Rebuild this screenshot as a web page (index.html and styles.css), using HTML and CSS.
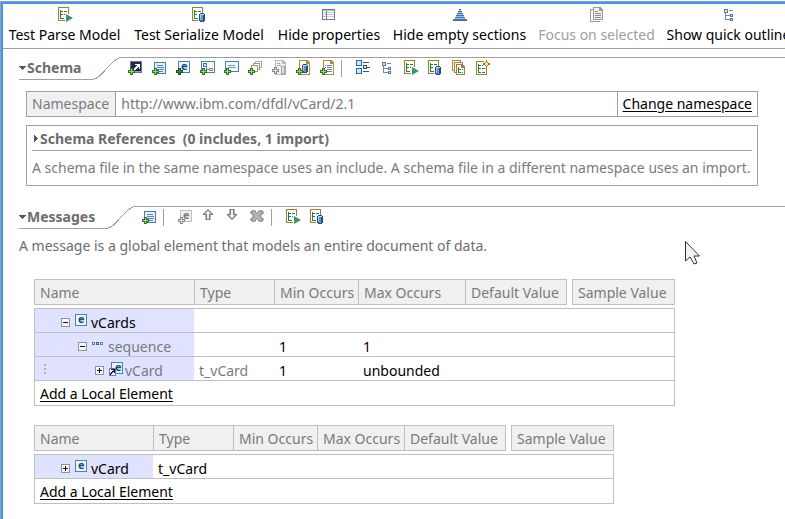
FILE: index.html
```html
<!DOCTYPE html>
<html lang="en">
<head>
<meta charset="utf-8">
<title>vCard</title>
<link rel="stylesheet" href="styles.css">
</head>
<body>
<svg class="defs" aria-hidden="true">
  <symbol id="plus" viewBox="0 0 7 7"><path d="M2 0h3v2h2v3H5v2H2V5H0V2h2z" fill="#28733a"/><path d="M3 1h1v5H3zM1 3h5v1H1z" fill="#a9d84a"/></symbol>
  <symbol id="plus-dark" viewBox="0 0 7 7"><path d="M2 0h3v2h2v3H5v2H2V5H0V2h2z" fill="#1d5128"/><path d="M3 1h1v5H3zM1 3h5v1H1z" fill="#4d8a3c"/></symbol>
  <symbol id="plus-gray" viewBox="0 0 7 7"><path d="M2 0h3v2h2v3H5v2H2V5H0V2h2z" fill="#8b8b8b"/><path d="M3 1h1v5H3zM1 3h5v1H1z" fill="#e2e2e2"/></symbol>
  <symbol id="cyl" viewBox="0 0 6 9"><path d="M1 0h4v1h1v7H5v1H1V8H0V1h1z" fill="#244f8c"/><path d="M1 2h1v5H1z" fill="#a9c6e8"/><path d="M2 2h2v6H2z" fill="#6793c8"/><path d="M1 1h4v1H1z" fill="#c7dcf2"/></symbol>
  <symbol id="sheet" viewBox="0 0 16 16"><path d="M1 0h11v14H1z" fill="#9d7f35"/><path d="M2 1h9v12H2z" fill="#fffdf4"/><path d="M3 3h1v9H3zM4 4h2v1H4zM4 7h2v1H4zM4 11h3v1H4zM7 4h3v1H7zM7 7h3v1H7z" fill="#1d8152"/></symbol>
  <symbol id="parse" viewBox="0 0 16 16"><use href="#sheet" width="16" height="16"/><path d="M8 6h2v1h2v1h2v6h-3v1H8z" fill="#fff"/><path d="M9 7l7 4-7 4z" fill="#3d9668" shape-rendering="auto"/></symbol>
  <symbol id="serialize" viewBox="0 0 16 16"><use href="#sheet" width="16" height="16"/><path d="M7 6h7v8H7z" fill="#fff"/><use href="#cyl" x="8" y="6" width="6" height="9"/></symbol>
  <symbol id="table" viewBox="0 0 16 16"><path d="M1 2h13v11H1z" fill="#707b89"/><path d="M2 4h3v1H2zM6 4h7v1H6zM2 6h3v1H2zM6 6h7v1H6zM2 8h3v1H2zM6 8h7v1H6zM2 10h3v2H2zM6 10h7v2H6z" fill="#fff"/><path d="M2 3h11v1H2z" fill="#a9bed5"/><path d="M2 5h3v1H2zM2 7h3v1H2zM2 9h3v1H2zM6 5h7v1H6zM6 7h7v1H6zM6 9h7v1H6z" fill="#c3cfdc"/></symbol>
  <symbol id="pyramid" viewBox="0 0 16 16"><path d="M7 2h2v2H7zM6 4h4v2H6zM5 6h6v2H5zM4 8h8v2H4zM3 10h10v2H3zM1 12h14v2H1z" fill="#3f6fad"/><path d="M7 3h2v1H7zM6 5h4v1H6zM5 7h6v1H5zM4 9h8v1H4zM3 11h10v1H3z" fill="#a6c3e5"/></symbol>
  <symbol id="pages" viewBox="0 0 16 16"><path d="M1 2h3v1H2v11h9v1H1z" fill="#9a9a9a"/><path d="M4 0h7l3 3v10H4z" fill="#9a9a9a"/><path d="M5 1h5v3h3v8H5z" fill="#f3f3f3"/><path d="M6 4h3v1H6zM6 6h6v1H6zM6 8h6v1H6zM6 10h6v1H6z" fill="#8d8d8d"/></symbol>
  <symbol id="outline" viewBox="0 0 16 16"><path d="M3 2h4v4H3zM9 7h3v3H9zM9 11h3v3H9z" fill="#5577ad"/><path d="M4 3h2v2H4zM10 8h1v1h-1zM10 12h1v1h-1z" fill="#dbe7f6"/><path d="M4 6h1v7H4zM5 8h4v1H5zM5 12h4v1H5zM8 3h4v1H8z" fill="#7188ac"/></symbol>
  <symbol id="add-arrow" viewBox="0 0 16 16"><path d="M3 1h12v12H3z" fill="#6b7694"/><path d="M4 2h10v10H4z" fill="#20264f"/><path d="M5 11h9v1H5z" fill="#8f9cc0"/><path d="M8 4h5v5h-1V7h-1v1h-1v1H9v1H7V8h1V7h1V6h1V5H8z" fill="#fff"/><use href="#plus" x="1" y="8" width="7" height="7"/></symbol>
  <symbol id="add-lines" viewBox="0 0 16 16"><path d="M3 2h12v12H3z" fill="#3f7fb0"/><path d="M4 3h10v10H4z" fill="#e6f1fb"/><path d="M6 5h6v1H6zM6 7h7v1H6zM6 9h7v1H6zM8 11h4v1H8z" fill="#5b84b5"/><use href="#plus" x="1" y="8" width="7" height="7"/></symbol>
  <symbol id="add-e" viewBox="0 0 16 16"><path d="M3 1h12v12H3z" fill="#4585b5"/><path d="M4 2h10v10H4z" fill="#edf5fd"/></symbol>
  <symbol id="add-tree" viewBox="0 0 16 16"><path d="M2 1h14v12H2z" fill="#4585b5"/><path d="M3 2h12v10H3z" fill="#f4f9ff"/><path d="M4 3h4v4H4z" fill="#4377b2"/><path d="M5 4h2v2H5z" fill="#dbe9f8"/><path d="M7 6h1v3h3v1H7z" fill="#6084ad"/><path d="M10 8h4v3h-4z" fill="#ba8a3c"/><path d="M11 9h2v1h-2z" fill="#f3dd9b"/><use href="#plus" x="1" y="8" width="7" height="7"/></symbol>
  <symbol id="add-note" viewBox="0 0 16 16"><path d="M2 1h14v11H2z" fill="#3f7fb0"/><path d="M3 2h12v9H3z" fill="#f2f8fe"/><path d="M5 5h7v1H5zM5 7h8v1H5z" fill="#7596bd"/><use href="#plus" x="1" y="8" width="7" height="7"/></symbol>
  <symbol id="add-group" viewBox="0 0 16 16"><path d="M8 1h7v7H8z" fill="#8fa9c4"/><path d="M8 1h7v1H8z" fill="#c8ae78"/><path d="M9 2h5v5H9z" fill="#fff"/><path d="M6 3h7v7H6z" fill="#9e9981"/><path d="M7 4h5v5H7z" fill="#fff"/><path d="M4 5h7v7H4z" fill="#ae9b69"/><path d="M5 6h5v5H5z" fill="#fff"/><use href="#plus" x="1" y="8" width="7" height="7"/></symbol>
  <symbol id="add-copy" viewBox="0 0 16 16"><path d="M4 0h8l3 3v12H4z" fill="#bdbdbd"/><path d="M5 1h6v3h3v10H5z" fill="#f0f0f0"/><path d="M6 3h3v1H6zM6 5h4v1H6z" fill="#aaa"/><path d="M10 6h5v9h-5z" fill="#a9a9a9"/><path d="M11 7h2v6h-2z" fill="#e2e2e2"/><use href="#plus-gray" x="1" y="7" width="7" height="7"/></symbol>
  <symbol id="add-cyl" viewBox="0 0 16 16"><path d="M4 0h8l3 3v12H4z" fill="#b28c3e"/><path d="M5 1h6v3h3v10H5z" fill="#fff8e6"/><use href="#cyl" x="7" y="4" width="6" height="9"/><use href="#plus" x="1" y="8" width="7" height="7"/></symbol>
  <symbol id="add-doc" viewBox="0 0 16 16"><path d="M4 0h8l3 3v12H4z" fill="#b28c3e"/><path d="M5 1h6v3h3v10H5z" fill="#fffdf8"/><path d="M6 5h1v1H6zM8 5h5v1H8zM6 7h1v1H6zM8 7h5v1H8zM8 9h5v1H8zM8 11h5v1H8z" fill="#627eae"/><use href="#plus" x="1" y="8" width="7" height="7"/></symbol>
  <symbol id="layout" viewBox="0 0 16 16"><path d="M1 0h6v6H1zM1 8h6v6H1z" fill="#226ca5"/><path d="M2 1h4v4H2zM2 9h4v4H2z" fill="#d3e8fa"/><path d="M8 2h6v1H8zM8 11h6v1H8zM12 7h3v1h-3z" fill="#31587e"/><path d="M8 5h4v4H8z" fill="#17538e"/><path d="M9 6h2v2H9z" fill="#d5e9fa"/></symbol>
  <symbol id="stack" viewBox="0 0 16 16"><path d="M1 0h9v11H1z" fill="#a58743"/><path d="M2 1h7v9H2z" fill="#fff8e6"/><path d="M3 2h9v11H3z" fill="#a58743"/><path d="M4 3h7v9H4z" fill="#fff8e6"/><path d="M5 4h6l3 3v8H5z" fill="#a07f3c"/><path d="M6 5h4v3h3v6H6z" fill="#fff"/><path d="M7 7h1v6H7zM8 9h2v1H8zM8 12h2v1H8zM11 9h1v1h-1zM11 12h1v1h-1z" fill="#1d8152"/></symbol>
  <symbol id="new-sheet" viewBox="0 0 16 16"><path d="M1 1h11v14H1z" fill="#9d7f35"/><path d="M2 2h9v12H2z" fill="#fffdf4"/><path d="M3 4h1v9H3zM4 5h2v1H4zM4 8h2v1H4zM4 12h2v1H4zM7 5h1v1H7zM7 8h3v1H7zM7 12h3v1H7z" fill="#1d8152"/><path d="M9 0h6v7H9z" fill="#fff"/><path d="M11 0h1v2h1v1h2v2h-2v1h-1v2h-1V6h-1V5H8V3h2V2h1z" fill="#a76b12"/><path d="M11 2h1v1h1v2h-1v1h-1V5h-1V3h1z" fill="#ffe5a0"/></symbol>
  <symbol id="add-e-gray" viewBox="0 0 16 16"><path d="M3 1h12v12H3z" fill="#b5c1cb"/><path d="M4 2h10v10H4z" fill="#f2f2f2"/></symbol>
  <symbol id="up" viewBox="0 0 16 16"><path d="M7 0l5 5v1H9.500v5h-5V6H2V5z" fill="#777" shape-rendering="auto"/><path d="M7 1.500L10 5H8v5H6V5H4z" fill="#f5f5f5" shape-rendering="auto"/></symbol>
  <symbol id="down" viewBox="0 0 16 16"><path d="M7 11l5-5V5H9.500V0h-5v5H2v1z" fill="#777" shape-rendering="auto"/><path d="M7 9.500L10 6H8V1H6v5H4z" fill="#f5f5f5" shape-rendering="auto"/></symbol>
  <symbol id="remove" viewBox="0 0 16 16"><path d="M3 1h3l2 3 2-3h3l2 2v1l-3 3 3 3v1l-2 2h-3l-2-3-2 3H3l-2-2v-1l3-3-3-3V3z" fill="#9b9b9b" shape-rendering="auto"/><path d="M4 3l8 8M12 3l-8 8" stroke="#b8b8b8" stroke-width="2" shape-rendering="auto"/></symbol>
  <symbol id="element" viewBox="0 0 13 14"><path d="M0 0h12v12H0z" fill="#4585b5"/><path d="M1 1h10v10H1z" fill="#edf5fd"/></symbol>
  <symbol id="element-ref" viewBox="0 0 15 14"><path d="M2 0h12v12H2z" fill="#4585b5"/><path d="M3 1h10v10H3z" fill="#edf5fd"/></symbol>
  <symbol id="ref-arrow" viewBox="0 0 15 14"><path d="M0 6h7v8H0z" fill="#667b99"/><path d="M1 7h5v6H1z" fill="#fff"/><path d="M2 7h4v4H5v-1H4v1H3v1H2v1H1v-2h1v-1h1V9h1V8H2z" fill="#171d48"/></symbol>
  <symbol id="sequence" viewBox="0 0 13 14"><path d="M0 4h3v3H0zM4 4h3v3H4zM8 4h3v3H8z" fill="#70798c"/><path d="M4 4h3v3H4z" fill="#236795"/><path d="M1 5h1v1H1zM5 5h1v1H5zM9 5h1v1H9z" fill="#fff"/></symbol>
  <symbol id="minus-box" viewBox="0 0 9 9"><path d="M0 0h9v9H0z" fill="#929292"/><path d="M1 1h7v7H1z" fill="#f7f7f7"/><path d="M2 4h5v1H2z" fill="#111"/></symbol>
  <symbol id="plus-box" viewBox="0 0 9 9"><use href="#minus-box" width="9" height="9"/><path d="M4 2h1v5H4z" fill="#111"/></symbol>
</svg>

<main class="editor">
  <nav class="actions">
    <button><svg class="icon"><use href="#parse"/></svg>Test Parse Model</button>
    <button><svg class="icon"><use href="#serialize"/></svg>Test Serialize Model</button>
    <button><svg class="icon"><use href="#table"/></svg>Hide properties</button>
    <button><svg class="icon"><use href="#pyramid"/></svg>Hide empty sections</button>
    <button disabled><svg class="icon"><use href="#pages"/></svg>Focus on selected</button>
    <button><svg class="icon"><use href="#outline"/></svg>Show quick outline</button>
  </nav>

  <section class="schema">
    <header class="bar">
      <h2><svg class="twisty" viewBox="0 0 7 4"><path d="M0 0h7L3.500 4z"/></svg>Schema</h2>
      <svg class="curve" viewBox="0 0 30 23"><path d="M0 22.500C10 22.500 19 .5 30 .5"/></svg>
      <div class="tools">
        <button aria-label="Add type"><svg class="icon"><use href="#add-arrow"/></svg></button>
        <button aria-label="Add message"><svg class="icon"><use href="#add-lines"/></svg></button>
        <button aria-label="Add element"><svg class="icon"><use href="#add-e"/><text x="6" y="10" class="e">e</text><use href="#plus-dark" x="1" y="8" width="7" height="7"/></svg></button>
        <button aria-label="Add complex type"><svg class="icon"><use href="#add-tree"/></svg></button>
        <button aria-label="Add simple type"><svg class="icon"><use href="#add-note"/></svg></button>
        <button aria-label="Add group"><svg class="icon"><use href="#add-group"/></svg></button>
        <button aria-label="Add copy" disabled><svg class="icon"><use href="#add-copy"/></svg></button>
        <button aria-label="Add format"><svg class="icon"><use href="#add-cyl"/></svg></button>
        <button aria-label="Add variable"><svg class="icon"><use href="#add-doc"/></svg></button>
        <span class="sep"></span>
        <button aria-label="Layout"><svg class="icon"><use href="#layout"/></svg></button>
        <button aria-label="Outline"><svg class="icon"><use href="#outline"/></svg></button>
        <button aria-label="Test parse"><svg class="icon"><use href="#parse"/></svg></button>
        <button aria-label="Test serialize"><svg class="icon"><use href="#serialize"/></svg></button>
        <button aria-label="Logical models"><svg class="icon"><use href="#stack"/></svg></button>
        <button aria-label="New model"><svg class="icon"><use href="#new-sheet"/></svg></button>
      </div>
    </header>
    <div class="panel namespace">
      <label for="ns">Namespace</label>
      <input id="ns" value="http://www.ibm.com/dfdl/vCard/2.1" readonly>
      <div class="change"><a href="#">Change namespace</a></div>
    </div>
    <div class="panel refs">
      <h3><svg class="closed" viewBox="0 0 4 7"><path d="M0 0v7l4-3.500z"/></svg>Schema References&nbsp; (0 includes, 1 import)</h3>
      <p>A schema file in the same namespace uses an include. A schema file in a different namespace uses an import.</p>
    </div>
  </section>

  <section class="messages">
    <header class="bar">
      <h2><svg class="twisty" viewBox="0 0 7 4"><path d="M0 0h7L3.500 4z"/></svg>Messages</h2>
      <svg class="curve" viewBox="0 0 30 23"><path d="M0 22.500C10 22.500 19 .5 30 .5"/></svg>
      <div class="tools">
        <button aria-label="Add message"><svg class="icon"><use href="#add-lines"/></svg></button>
        <span class="sep"></span>
        <button aria-label="Add element" disabled><svg class="icon"><use href="#add-e-gray"/><text x="6" y="10" class="e faded">e</text><use href="#plus-gray" x="1" y="8" width="7" height="7"/></svg></button>
        <button aria-label="Move up" disabled><svg class="icon"><use href="#up"/></svg></button>
        <button aria-label="Move down" disabled><svg class="icon"><use href="#down"/></svg></button>
        <button aria-label="Delete" disabled><svg class="icon"><use href="#remove"/></svg></button>
        <span class="sep"></span>
        <button aria-label="Test parse"><svg class="icon"><use href="#parse"/></svg></button>
        <button aria-label="Test serialize"><svg class="icon"><use href="#serialize"/></svg></button>
      </div>
    </header>
    <p class="hint">A message is a global element that models an entire document of data.</p>

    <table class="wide">
      <colgroup><col class="c-name"><col class="c-type"><col class="c-min"><col class="c-max"><col class="c-def"><col class="c-gap"><col class="c-sample"></colgroup>
      <thead>
        <tr><th>Name</th><th>Type</th><th>Min Occurs</th><th>Max Occurs</th><th>Default Value</th><td></td><th>Sample Value</th></tr>
        <tr class="spacer"><td colspan="7"></td></tr>
      </thead>
      <tbody>
        <tr><td class="name"><div class="node"><svg class="toggle"><use href="#minus-box"/></svg><svg class="kind"><use href="#element"/><text x="3" y="9" class="e">e</text></svg>vCards</div></td><td></td><td></td><td></td><td></td><td></td><td></td></tr>
        <tr><td class="name"><div class="node level-2"><svg class="toggle"><use href="#minus-box"/></svg><svg class="kind"><use href="#sequence"/></svg>sequence</div></td><td></td><td>1</td><td>1</td><td></td><td></td><td></td></tr>
        <tr><td class="name"><div class="node level-3"><span class="grip"></span><svg class="toggle"><use href="#plus-box"/></svg><svg class="kind ref"><use href="#element-ref"/><text x="6" y="9" class="e">e</text><use href="#ref-arrow"/></svg>vCard</div></td><td class="dim">t_vCard</td><td>1</td><td>unbounded</td><td></td><td></td><td></td></tr>
        <tr class="add"><td colspan="7"><a href="#">Add a Local Element</a></td></tr>
      </tbody>
    </table>

    <table class="narrow">
      <colgroup><col class="c-name"><col class="c-type"><col class="c-min"><col class="c-max"><col class="c-def"><col class="c-gap"><col class="c-sample"></colgroup>
      <thead>
        <tr><th>Name</th><th>Type</th><th>Min Occurs</th><th>Max Occurs</th><th>Default Value</th><td></td><th>Sample Value</th></tr>
        <tr class="spacer"><td colspan="7"></td></tr>
      </thead>
      <tbody>
        <tr><td class="name"><div class="node"><svg class="toggle"><use href="#plus-box"/></svg><svg class="kind"><use href="#element"/><text x="3" y="9" class="e">e</text></svg>vCard</div></td><td>t_vCard</td><td></td><td></td><td></td><td></td><td></td></tr>
        <tr class="add"><td colspan="7"><a href="#">Add a Local Element</a></td></tr>
      </tbody>
    </table>
  </section>
</main>
<svg class="pointer" viewBox="0 0 16 24"><path d="M.5 .5V20L5 16l4 7 3-1-3-7h5.500z" fill="#f4f4f6" stroke="#33333b"/></svg>
</body>
</html>
```
FILE: styles.css
```css
* { box-sizing: border-box; }

html { overflow: hidden; }

body {
  margin: 0;
  padding: 1px 0 0;
  background: #fff;
  color: #000;
  font: 14px/20px "Noto Sans", "Open Sans", sans-serif;
}

h2, h3, p { margin: 0; }
h2, h3 { font-size: 14px; line-height: 20px; color: #6d6d6d; }
a { color: #000; text-underline-offset: 2px; }

button {
  border: 0;
  padding: 0;
  background: none;
  color: inherit;
  font: inherit;
}

svg { display: block; flex: none; shape-rendering: crispEdges; }
.defs { position: absolute; width: 0; height: 0; }
.icon, .kind { overflow: visible; }
.icon { width: 16px; height: 16px; }
.e { font: bold 11px "Open Sans", sans-serif; fill: #174a87; }
.e.faded { fill: #7b7b7b; }

.editor {
  min-height: calc(100vh - 1px);
  border-left: 1px solid #a0a0a0;
  border-top: 1px solid #a0a0a0;
  box-shadow: inset 2px 2px #3399ff;
  overflow: hidden;
}

.actions {
  display: grid;
  grid-template-columns: 113px 134px 104px 135px 117px 125px;
  column-gap: 11px;
  margin-left: 2px;
  padding: 5px 0 3px 5px;
  border-bottom: 1px solid #a0a0a0;
}
.actions button {
  display: flex;
  flex-direction: column;
  align-items: center;
  gap: 2px;
  white-space: nowrap;
}
.actions button:disabled { color: #a0a0a0; }

.schema { padding-top: 8px; }
.messages { padding-top: 20px; }

.bar { display: flex; margin-left: 18px; }
.bar h2 {
  display: flex;
  align-items: center;
  gap: 1px;
  height: 23px;
  padding-right: 11px;
  border-bottom: 1px solid #a0a0a0;
}
.twisty { width: 7px; height: 4px; fill: #555; }
.closed { width: 4px; height: 7px; fill: #555; }
.curve { width: 30px; height: 23px; fill: none; stroke: #a0a0a0; }
.tools {
  display: flex;
  flex: 1;
  height: 22px;
  padding: 2px 0 0 1px;
  border-top: 1px solid #a0a0a0;
}
.tools button {
  display: flex;
  justify-content: center;
  width: 24px;
  height: 16px;
}
.sep { width: 1px; height: 17px; margin: 0 9px 0 2px; background: #a0a0a0; }

.panel {
  width: 732px;
  margin-left: 25px;
  border: 1px solid #a0a0a0;
  color: #7a7a7a;
}
.namespace { display: flex; height: 26px; margin-top: 11px; }
.namespace label {
  padding: 2px 6px 2px 5px;
  border-right: 1px solid #a0a0a0;
  background: #f0f0f0;
}
.namespace input {
  flex: 1;
  min-width: 0;
  padding: 0 5px;
  border: 0;
  color: inherit;
  font: inherit;
}
.change { padding: 2px 5px; border-left: 1px solid #a0a0a0; }

.refs { margin-top: 8px; padding: 2px 5px 7px; }
.refs h3 {
  display: flex;
  align-items: center;
  gap: 2px;
  height: 23px;
  padding: 0 0 1px 2px;
  border-bottom: 1px solid #a0a0a0;
}
.refs p { margin-top: 7px; white-space: nowrap; }

.hint { margin: 7px 0 0 18px; color: #6d6d6d; }

table {
  table-layout: fixed;
  margin-left: 33px;
  border-spacing: 0;
}
.wide { width: 641px; margin-top: 23px; }
.narrow { width: 580px; margin-top: 19px; }
.wide .c-name { width: 160px; }
.wide .c-max { width: 107px; }
.c-name { width: 119px; }
.c-type { width: 80px; }
.c-min { width: 84px; }
.c-max { width: 87px; }
.c-def { width: 102px; }
.c-gap { width: 5px; }
.c-sample { width: 103px; }

th, td { padding: 0; text-align: left; font-weight: 400; white-space: nowrap; }
th {
  height: 26px;
  padding: 2px 0 0 5px;
  border: 1px solid #c0c0c0;
  border-right: 0;
  background: #f0f0f0;
  color: #7a7a7a;
}
th:nth-child(5), th:last-child { border-right: 1px solid #c0c0c0; }
.spacer td { height: 3px; }

tbody td {
  height: 24px;
  padding: 6px 0 0 5px;
  border-bottom: 1px solid #c0c0c0;
  line-height: 16px;
  vertical-align: top;
}
tbody tr:first-child td { height: 25px; border-top: 1px solid #c0c0c0; }
tbody .add td { height: 25px; padding-top: 5px; }
tbody td:first-child { border-left: 1px solid #c0c0c0; }
tbody td:last-child { border-right: 1px solid #c0c0c0; }
tbody td.name { padding-left: 0; background: #dfe3ff; }
.dim { color: #7a7a7a; }

.node { display: flex; align-items: center; height: 16px; padding-left: 26px; }
.level-2 { padding-left: 43px; color: #7a7a7a; }
.level-3 { padding-left: 9px; color: #7a7a7a; }
.toggle { width: 9px; height: 9px; margin: 0 5px 2px 0; }
.kind { width: 13px; height: 14px; margin: 0 3px 4px 0; }
.kind.ref { width: 15px; margin-right: 1px; }
.grip {
  width: 2px;
  height: 12px;
  margin: 0 49px 2px 0;
  background: repeating-linear-gradient(#b0b0b8 0 2px, transparent 2px 4px);
}

.pointer {
  position: absolute;
  left: 685px;
  top: 241px;
  width: 16px;
  height: 24px;
  shape-rendering: auto;
}
```
